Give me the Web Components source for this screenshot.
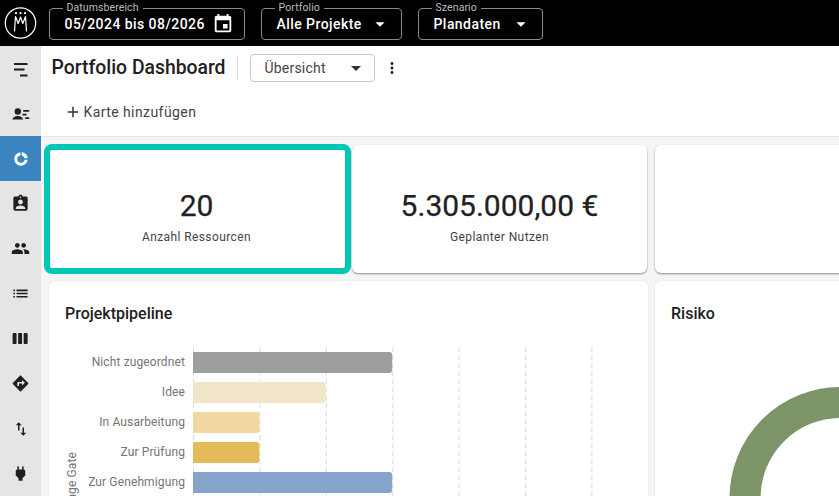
<!DOCTYPE html>
<html lang="de"><head><meta charset="utf-8"><title>Portfolio Dashboard</title>
<style>
html,body{margin:0;height:100%;overflow:hidden;background:#f5f5f5}
body{font-family:Roboto,"Liberation Sans",sans-serif}
</style></head><body>
<x-app></x-app>
<script>
const P={
event:'M17 12h-5v5h5v-5zM16 1v2H8V1H6v2H5c-1.11 0-1.99.9-1.99 2L3 19c0 1.1.89 2 2 2h14c1.1 0 2-.9 2-2V5c0-1.1-.9-2-2-2h-1V1h-2zm3 18H5V8h14v11z',
drop:'M7 10l5 5 5-5z',
menu:'M5 6h13.5v2H5zM5 11.5h10.5v2H5zM11 17.5h7.5v2H11z',
person:'M8.8 6.3a3.2 3.2 0 1 0 0 6.4 3.2 3.2 0 0 0 0-6.4zM3.5 17.5c0-2.2 3-3.6 5.3-3.6s5.3 1.4 5.3 3.6zM14.2 8h6v1.7h-6zM13.5 11.7h4v1.7h-4zM16.2 15.3h4V17h-4z',
donut:'M11 2A10.05 10.05 0 1 0 22 13H17.4A5.5 5.5 0 1 1 11 6.6zM13 2A10.05 10.05 0 0 1 22 11H17.4A5.5 5.5 0 0 0 13 6.6z',
badge:'M19 3h-4.18C14.4 1.84 13.3 1 12 1c-1.3 0-2.4.84-2.82 2H5c-1.1 0-2 .9-2 2v14c0 1.1.9 2 2 2h14c1.1 0 2-.9 2-2V5c0-1.1-.9-2-2-2zm-7 0c.55 0 1 .45 1 1s-.45 1-1 1-1-.45-1-1 .45-1 1-1zm0 4c1.66 0 3 1.34 3 3s-1.34 3-3 3-3-1.34-3-3 1.34-3 3-3zm6 12H6v-1.4c0-2 4-3.1 6-3.1s6 1.1 6 3.1V19z',
people:'M16 11c1.66 0 2.99-1.34 2.99-3S17.66 5 16 5c-1.66 0-3 1.34-3 3s1.34 3 3 3zm-8 0c1.66 0 2.99-1.34 2.99-3S9.66 5 8 5C6.34 5 5 6.34 5 8s1.34 3 3 3zm0 2c-2.33 0-7 1.17-7 3.5V19h14v-2.5c0-2.33-4.67-3.5-7-3.5zm8 0c-.29 0-.62.02-.97.05 1.16.84 1.97 1.97 1.97 3.45V19h6v-2.5c0-2.33-4.67-3.5-7-3.5z',
list:'M3 13h2v-2H3v2zm0 4h2v-2H3v2zm0-8h2V7H3v2zm4 4h14v-2H7v2zm0 4h14v-2H7v2zM7 7v2h14V7H7z',
week:'M6 5H3c-.55 0-1 .45-1 1v12c0 .55.45 1 1 1h3c.55 0 1-.45 1-1V6c0-.55-.45-1-1-1zm14 0h-3c-.55 0-1 .45-1 1v12c0 .55.45 1 1 1h3c.55 0 1-.45 1-1V6c0-.55-.45-1-1-1zm-7 0h-3c-.55 0-1 .45-1 1v12c0 .55.45 1 1 1h3c.55 0 1-.45 1-1V6c0-.55-.45-1-1-1z',
dir:'M21.71 11.29l-9-9c-.39-.39-1.02-.39-1.41 0l-9 9c-.39.39-.39 1.02 0 1.41l9 9c.39.39 1.02.39 1.41 0l9-9c.39-.38.39-1.01 0-1.41zM14 14.5V12h-4v3H8v-4c0-.55.45-1 1-1h5V7.5l3.5 3.5-3.5 3.5z',
swap:'M16 17.01V10h-2v7.01h-3L15 21l4-3.99h-3zM9 3L5 6.99h3V14h2V6.99h3L9 3z',
plug:'M16.01 7L16 3h-2v4h-4V3H8v4h-.01C7 6.99 6 7.99 6 8.99v5.49L9.5 18v3h5v-3l3.5-3.51v-5.5c0-1-1-2-1.99-1.99z',
add:'M19 13h-6v6h-2v-6H5v-2h6V5h2v6h6v2z',
more:'M12 8c1.1 0 2-.9 2-2s-.9-2-2-2-2 .9-2 2 .9 2 2 2zm0 2c-1.1 0-2 .9-2 2s.9 2 2 2 2-.9 2-2-.9-2-2-2zm0 6c-1.1 0-2 .9-2 2s.9 2 2 2 2-.9 2-2-.9-2-2-2z'
};
const svg=(n,s,c='currentColor')=>`<svg width="${s}" height="${s}" viewBox="0 0 24 24" fill="${c}" style="display:block;flex:none"><path d="${P[n]}"/></svg>`;
class Base extends HTMLElement{
  render(h){(this.shadowRoot||this.attachShadow({mode:'open'})).innerHTML=h}
}
class XField extends Base{connectedCallback(){
  const w=this.getAttribute('w'),ic=this.getAttribute('icon');
  this.render(`<style>
  :host{display:block;box-sizing:border-box;width:${w}px;height:32px;border:1px solid #8a8a8a;border-radius:4px;position:relative;color:#fff;top:1px}
  .lab{position:absolute;left:13px;top:-7px;background:#000;padding:0 4px;font-size:10.5px;line-height:12px;color:#bdbdbd;letter-spacing:.1px}
  .row{display:flex;align-items:center;justify-content:space-between;height:100%;padding:0 ${this.getAttribute('pr')}px 0 15px}
  .v{font-size:14px;font-weight:500;letter-spacing:.44px;white-space:nowrap}
  </style><span class="lab">${this.getAttribute('label')}</span><div class="row"><span class="v"><slot></slot></span>${ic=='event'?svg('event',22):svg('drop',22)}</div>`);
}}
class XTopbar extends Base{connectedCallback(){
  this.render(`<style>
  :host{display:flex;align-items:center;height:46px;background:#000;flex:none;gap:16px;box-sizing:border-box}
  .logo{width:33px;margin:0 -4px 0 3.5px;flex:none;display:block}
  </style>
  <svg class="logo" width="33" height="33" viewBox="0 0 33 33" fill="none" stroke="#fff">
    <circle cx="16.5" cy="16" r="15.2" stroke-width="1.2"/>
    <path d="M10.5 24.5l1-15 2.7 7 2.3-6.5 2.3 6.5 2.7-7 1 15" stroke-width="1.2" stroke-linejoin="round"/>
    <g fill="#fff" stroke="none"><circle cx="12" cy="6.2" r="1.1"/><circle cx="16.5" cy="6.2" r="1.1"/><circle cx="21" cy="6.2" r="1.1"/></g>
  </svg><slot></slot>`);
}}
class XNav extends Base{connectedCallback(){
  const on=this.hasAttribute('active');
  this.render(`<style>
  :host{display:flex;align-items:center;justify-content:center;height:45px;flex:none;color:${on?'#fff':'#1f1f1f'};background:${on?'#3a84c0':'transparent'}}
  </style>${svg(this.getAttribute('icon'),+(this.getAttribute('s')||19))}`);
}}
class XSidebar extends Base{connectedCallback(){
  this.render(`<style>
  :host{display:flex;flex-direction:column;width:41px;flex:none;background:#e5e5e5;box-sizing:border-box;overflow:hidden}
  </style><slot></slot>`);
}}
class XHeader extends Base{connectedCallback(){
  this.render(`<style>
  :host{display:block;height:91px;flex:none;box-sizing:border-box;background:#fff;border-bottom:1px solid #e6e6e6}
  .top{display:flex;align-items:center;height:44px;padding:0 0 0 10.5px}
  h1{margin:0;font-size:19.35px;font-weight:500;color:#212121;line-height:44px;white-space:nowrap}
  .div{width:1px;height:24px;background:#e0e0e0;margin:0 12px 0 11px}
  .sel{display:flex;align-items:center;justify-content:space-between;box-sizing:border-box;width:125px;height:28px;border:1px solid #c8c8c8;border-radius:4px;padding:0 6px 0 14px;font-size:14px;letter-spacing:.2px;color:#444}
  .more{margin-left:8px;color:#222}
  .add{display:flex;align-items:center;gap:2px;margin:10px 0 0 22.5px;height:24px;font-size:14px;letter-spacing:.42px;color:#444}
  .add svg{color:#333}
  </style>
  <div class="top"><h1>Portfolio Dashboard</h1><span class="div"></span><div class="sel"><span>Übersicht</span>${svg('drop',24,'#333')}</div><span class="more">${svg('more',18)}</span></div>
  <div class="add">${svg('add',18)}<span>Karte hinzufügen</span></div>`);
}}
class XKpi extends Base{connectedCallback(){
  const sel=this.hasAttribute('selected');
  this.render(`<style>
  :host{display:flex;flex-direction:column;align-items:center;box-sizing:border-box;background:#fff;border-radius:${sel?8:6}px;flex:none;overflow:hidden;
    ${sel?'height:130px;border:6px solid #00c8b4;padding:39px 2px 0 0':'height:128px;margin-top:1px;box-shadow:0 1px 2px rgba(0,0,0,.45);padding-top:44px'}}
  .n{font-size:30px;font-weight:400;-webkit-text-stroke:.25px #212121;line-height:34px;color:#212121;white-space:nowrap}
  .l{font-size:12px;line-height:16px;margin-top:6px;color:#444;letter-spacing:.4px;white-space:nowrap}
  </style><div class="n"><slot name="n"></slot></div><div class="l"><slot name="l"></slot></div>`);
}}
class XCard extends Base{connectedCallback(){
  this.render(`<style>
  :host{display:block;box-sizing:border-box;background:#fff;border-radius:6px;flex:none;height:240px;overflow:hidden;box-shadow:0 0 3px rgba(0,0,0,.08)}
  h2{margin:0;font-size:16px;font-weight:500;line-height:20px;color:#212121;padding:23px 0 0 16px;height:41px;box-sizing:content-box}
  </style><h2>${this.getAttribute('heading')}</h2><slot></slot>`);
}}
class XPipeline extends Base{connectedCallback(){
  const rows=[['Nicht zugeordnet',3,'#9e9e9e'],['Idee',2,'#f0e5c8'],['In Ausarbeitung',1,'#f2d8a0'],['Zur Prüfung',1,'#e3bb5a'],['Zur Genehmigung',3,'#86a4cb']];
  const u=66.4,x0=144,top=5;
  let g='';
  for(let i=0;i<7;i++){const x=x0+i*u+.5;g+=`<line x1="${x}" x2="${x}" y1="0" y2="170" stroke="#dcdcdc" stroke-dasharray="5 3"/>`}
  let b='';
  rows.forEach((r,i)=>{const y=top+i*30;
    b+=`<path d="M${x0} ${y}h${r[1]*u-3}a3 3 0 0 1 3 3v15a3 3 0 0 1-3 3h-${r[1]*u-3}z" fill="${r[2]}"/>`;
    b+=`<text x="${x0-8}" y="${y+13.5}" text-anchor="end">${r[0]}</text>`});
  this.render(`<style>
  :host{display:block;padding:2px 0 0 0}
  svg{display:block;font-family:Roboto,"Liberation Sans",sans-serif;font-size:12px;letter-spacing:.12px;fill:#757575}
  </style><svg width="600" height="170" viewBox="0 0 600 170">${g}${b}
  <text transform="translate(27 105) rotate(-90)" text-anchor="end">Stage Gate</text></svg>`);
}}
class XDonut extends Base{connectedCallback(){
  this.render(`<style>
  :host{display:block;padding-top:42px}
  svg{display:block}
  </style><svg width="190" height="130" viewBox="0 0 190 130"><circle cx="185.5" cy="111" r="95.5" fill="none" stroke="#7d9469" stroke-width="31"/></svg>`);
}}
class XApp extends Base{connectedCallback(){
  this.render(`<style>
  :host{display:flex;flex-direction:column;height:496px;width:839px;overflow:hidden;color:#212121}
  .body{display:flex;flex:1;min-height:0}
  .main{flex:1;min-width:0;display:flex;flex-direction:column;overflow:hidden}
  .grid{display:flex;flex-direction:column;gap:7px;padding:7px 0 0 3px;background:#f5f5f5;flex:1}
  .r{display:flex}
  .r2{padding-left:5px;gap:7px}
  </style>
  <x-topbar>
    <x-field label="Datumsbereich" w="196" icon="event" pr="10">05/2024 bis 08/2026</x-field>
    <x-field label="Portfolio" w="141" pr="10">Alle Projekte</x-field>
    <x-field label="Szenario" w="125" pr="10">Plandaten</x-field>
  </x-topbar>
  <div class="body">
    <x-sidebar>
      <x-nav icon="menu" s="24"></x-nav><x-nav icon="person" s="24"></x-nav><x-nav icon="donut" s="16" active></x-nav><x-nav icon="badge"></x-nav>
      <x-nav icon="people"></x-nav><x-nav icon="list"></x-nav><x-nav icon="week"></x-nav><x-nav icon="dir"></x-nav>
      <x-nav icon="swap" s="18"></x-nav><x-nav icon="plug"></x-nav>
    </x-sidebar>
    <div class="main">
      <x-header></x-header>
      <div class="grid">
        <div class="r">
          <x-kpi selected style="width:307px"><span slot="n">20</span><span slot="l">Anzahl Ressourcen</span></x-kpi>
          <x-kpi style="width:295px;margin-left:1px"><span slot="n">5.305.000,00 €</span><span slot="l">Geplanter Nutzen</span></x-kpi>
          <x-kpi style="width:300px;margin-left:7.5px"></x-kpi>
        </div>
        <div class="r r2">
          <x-card heading="Projektpipeline" style="width:599px"><x-pipeline></x-pipeline></x-card>
          <x-card heading="Risiko" style="width:300px"><x-donut></x-donut></x-card>
        </div>
      </div>
    </div>
  </div>`);
}}
customElements.define('x-field',XField);customElements.define('x-topbar',XTopbar);customElements.define('x-nav',XNav);
customElements.define('x-sidebar',XSidebar);customElements.define('x-header',XHeader);customElements.define('x-kpi',XKpi);
customElements.define('x-card',XCard);customElements.define('x-pipeline',XPipeline);customElements.define('x-donut',XDonut);customElements.define('x-app',XApp);
</script></body></html>
